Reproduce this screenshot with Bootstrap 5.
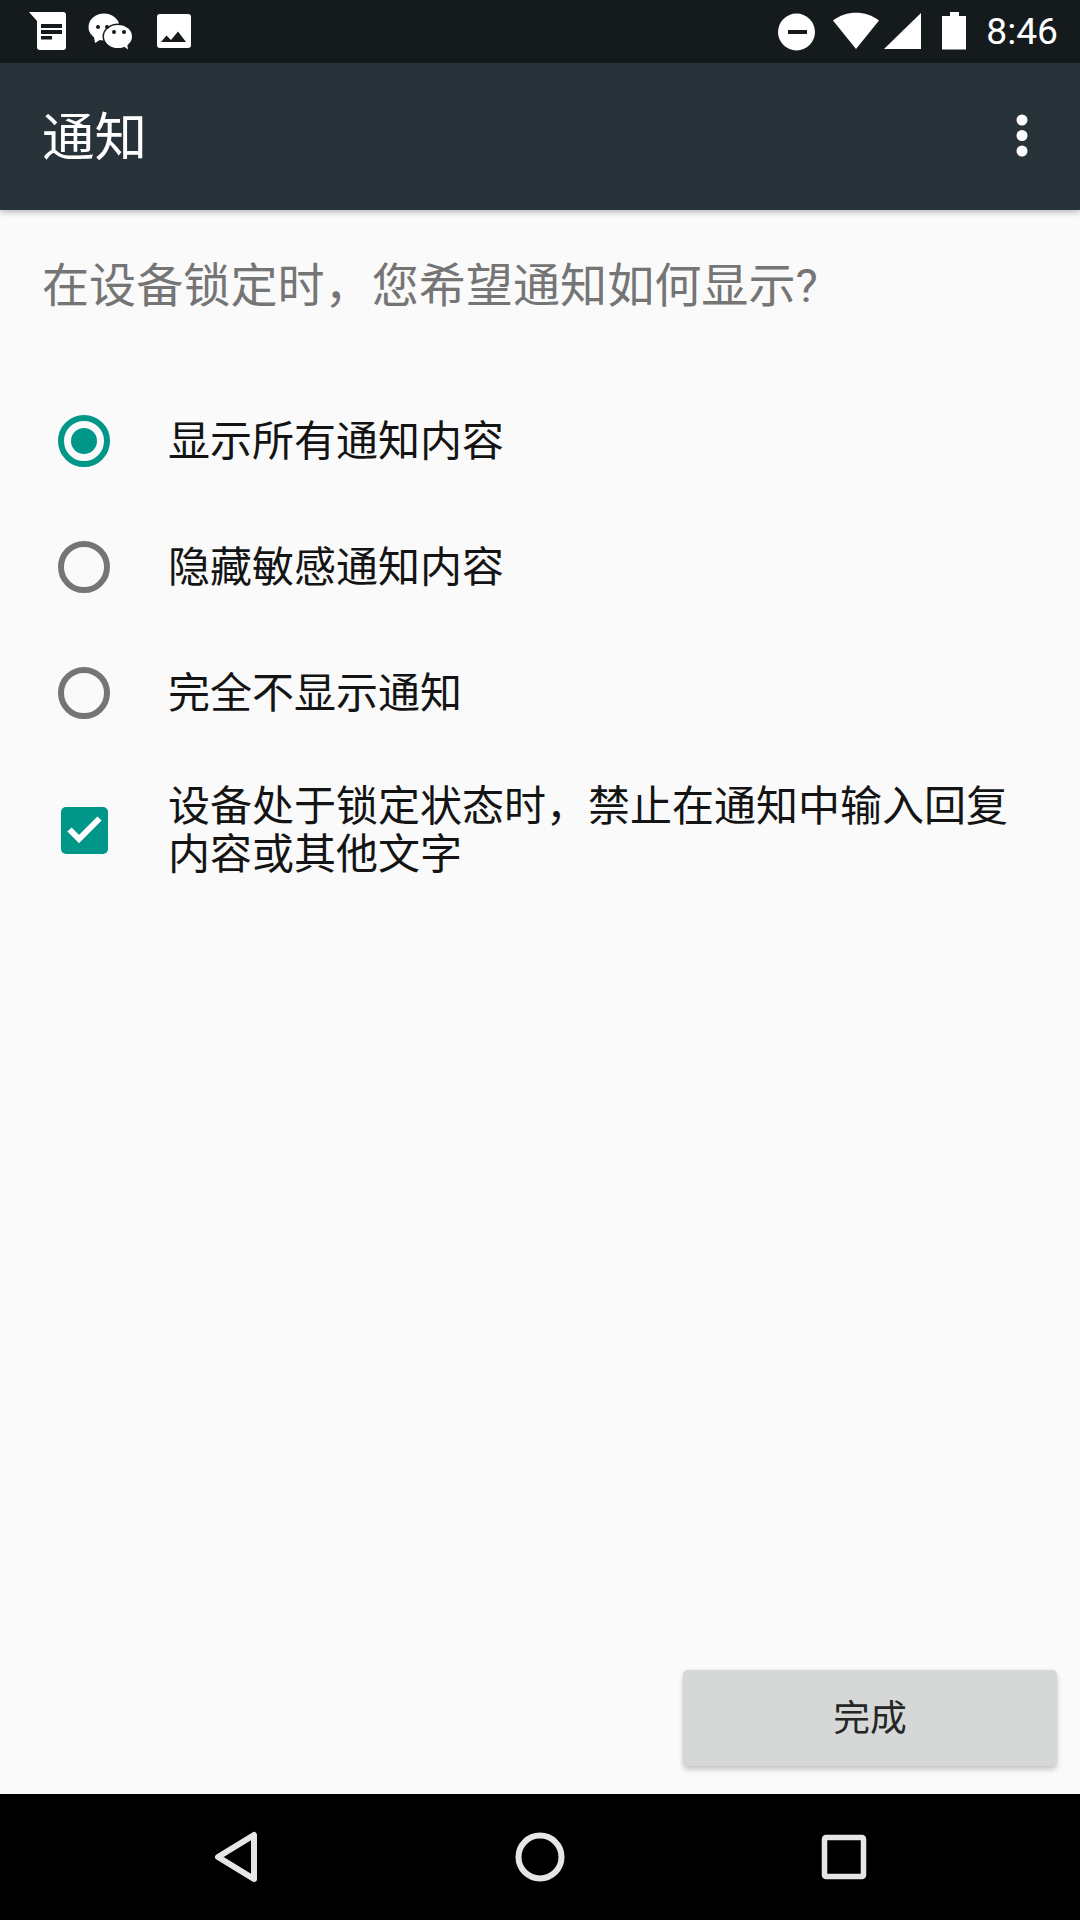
<!doctype html>
<html lang="zh-CN">
<head>
<meta charset="utf-8">
<link href="https://cdn.jsdelivr.net/npm/bootstrap@5.3.0/dist/css/bootstrap.min.css" rel="stylesheet">
<style>
html,body{margin:0;height:1920px;overflow:hidden}
body{width:1080px;background:#fafafa;font-family:Roboto,"Noto Sans CJK SC",sans-serif}
.phone-shell{height:1920px}
.status-strip{height:63px;background:#151a1d;color:#fff;flex:none}
.status-left{padding-left:16px}
.status-time{font-size:37.2px;font-weight:400;line-height:63px;padding-right:22px;margin-left:17px;font-family:Roboto,sans-serif}
.status-strip svg{display:block}
.app-head{height:147px;background:#283339;color:#fff;flex:none;box-shadow:0 2px 6px rgba(0,0,0,.28);padding:0 42px;position:relative;z-index:1}
.app-title{font-size:52.5px;line-height:1;font-weight:400;margin:4px 0 0}
.more-dots{margin-right:10px;margin-top:-1px}
.main-area{min-height:0}
.prompt{font-size:47.1px;line-height:60px;color:#757575;padding:46px 42px 0;height:168px;margin:0;font-weight:400}
.choice{display:flex;align-items:center;padding:0 48px 0 58px;color:#141414;font-size:42px;line-height:48px}
.choice-h{height:126px}
.choice-m{height:148px}
.choice-text{padding-top:2px}
.mark-box{width:52px;height:52px;flex:none;margin-right:58px;display:flex;align-items:center;justify-content:center}
.dot-ring{width:52px;height:52px;border-radius:50%;border:6px solid #757575;display:flex;align-items:center;justify-content:center}
.dot-ring.is-on{border-color:#009688}
.dot-ring.is-on::after{content:"";width:26px;height:26px;border-radius:50%;background:#009688}
.tick-box{width:47px;height:47px;border-radius:5px;background:#009688;display:flex;align-items:center;justify-content:center}
.foot-row{padding:0 23px 28px 0}
.done-btn{width:374px;height:96px;background:#d6d8d7;border:0;border-radius:5px;color:#262626;font-size:36.75px;line-height:1;box-shadow:0 4px 5px rgba(0,0,0,.18),0 0 3px rgba(0,0,0,.08);padding:3px 0 0}
.nav-strip{height:126px;background:#000;flex:none;gap:240px}
</style>
</head>
<body>
<div class="phone-shell d-flex flex-column">
  <div class="status-strip d-flex align-items-center">
    <div class="status-left d-flex">
      <svg width="63" height="63" viewBox="16 0 63 63"><path fill="#fff" d="M29 12H63a3 3 0 0 1 3 3V47a3 3 0 0 1-3 3H40a3 3 0 0 1-3-3V21Z"/><path fill="#151a1d" d="M41 24H62V28H41ZM41 30H62V34H41ZM41 36H52V39.500H41Z"/></svg>
      <svg width="63" height="63" viewBox="79 0 63 63"><ellipse cx="104" cy="27" rx="15.500" ry="13.500" fill="#fff"/><path fill="#fff" d="M94 37 95 43 103 38Z"/><ellipse cx="118" cy="36.500" rx="15.500" ry="13" fill="#151a1d"/><ellipse cx="118" cy="36.500" rx="14" ry="11.500" fill="#fff"/><path fill="#fff" d="M122 45 128 49.500 127 43Z"/><circle cx="98" cy="27" r="2" fill="#151a1d"/><circle cx="107" cy="27" r="2" fill="#151a1d"/><circle cx="114" cy="32" r="2" fill="#151a1d"/><circle cx="124" cy="32" r="2" fill="#151a1d"/></svg>
      <svg width="63" height="63" viewBox="142 0 63 63"><rect x="157" y="14" width="34" height="34" rx="3" fill="#fff"/><path fill="#151a1d" d="M161 42 166.500 35.500 171 40 178 31.500 186 42Z"/></svg>
    </div>
    <svg class="ms-auto" width="200" height="63" viewBox="770 0 200 63"><circle cx="797.500" cy="32" r="18.500" fill="#fff"/><rect x="789" y="30" width="19" height="4" fill="#151a1d"/><path fill="#fff" d="M834 20.500C847 10 867 10 880 20.500L857 49Z"/><path fill="#fff" d="M885 49 922 13V49Z"/><path fill="#fff" d="M943 16H951V12H960V16H967V49.500H943Z"/></svg>
    <div class="status-time">8:46</div>
  </div>

  <header class="app-head d-flex align-items-center justify-content-between">
    <h1 class="app-title">通知</h1>
    <svg class="more-dots" width="12" height="44" viewBox="0 0 12 44"><circle cx="6" cy="6" r="5.500" fill="#fff"/><circle cx="6" cy="21.500" r="5.500" fill="#fff"/><circle cx="6" cy="37" r="5.500" fill="#fff"/></svg>
  </header>

  <main class="main-area flex-grow-1 d-flex flex-column">
    <p class="prompt">在设备锁定时，您希望通知如何显示?</p>
    <div class="choice choice-h"><span class="mark-box"><span class="dot-ring is-on"></span></span><span class="choice-text">显示所有通知内容</span></div>
    <div class="choice choice-h"><span class="mark-box"><span class="dot-ring"></span></span><span class="choice-text">隐藏敏感通知内容</span></div>
    <div class="choice choice-h"><span class="mark-box"><span class="dot-ring"></span></span><span class="choice-text">完全不显示通知</span></div>
    <div class="choice choice-m"><span class="mark-box"><span class="tick-box"><svg width="40" height="32" viewBox="64 814 40 32"><path d="M69.500 829.500 79 839 99.500 818.500" fill="none" stroke="#fff" stroke-width="6"/></svg></span></span><span class="choice-text">设备处于锁定状态时，禁止在通知中输入回复内容或其他文字</span></div>
    <div class="foot-row mt-auto d-flex justify-content-end">
      <button type="button" class="btn done-btn">完成</button>
    </div>
  </main>

  <nav class="nav-strip d-flex align-items-center justify-content-center">
    <svg width="64" height="64" viewBox="0 0 64 64"><path d="M50 10V54L14 32Z" fill="none" stroke="#e6e6e6" stroke-width="6" stroke-linejoin="round"/></svg>
    <svg width="64" height="64" viewBox="0 0 64 64"><circle cx="32" cy="32" r="21.500" fill="none" stroke="#e6e6e6" stroke-width="6"/></svg>
    <svg width="64" height="64" viewBox="0 0 64 64"><rect x="12.500" y="12.500" width="39" height="39" rx="1.500" fill="none" stroke="#e6e6e6" stroke-width="5.500"/></svg>
  </nav>
</div>
<script src="https://cdn.jsdelivr.net/npm/bootstrap@5.3.0/dist/js/bootstrap.bundle.min.js"></script>
</body>
</html>
